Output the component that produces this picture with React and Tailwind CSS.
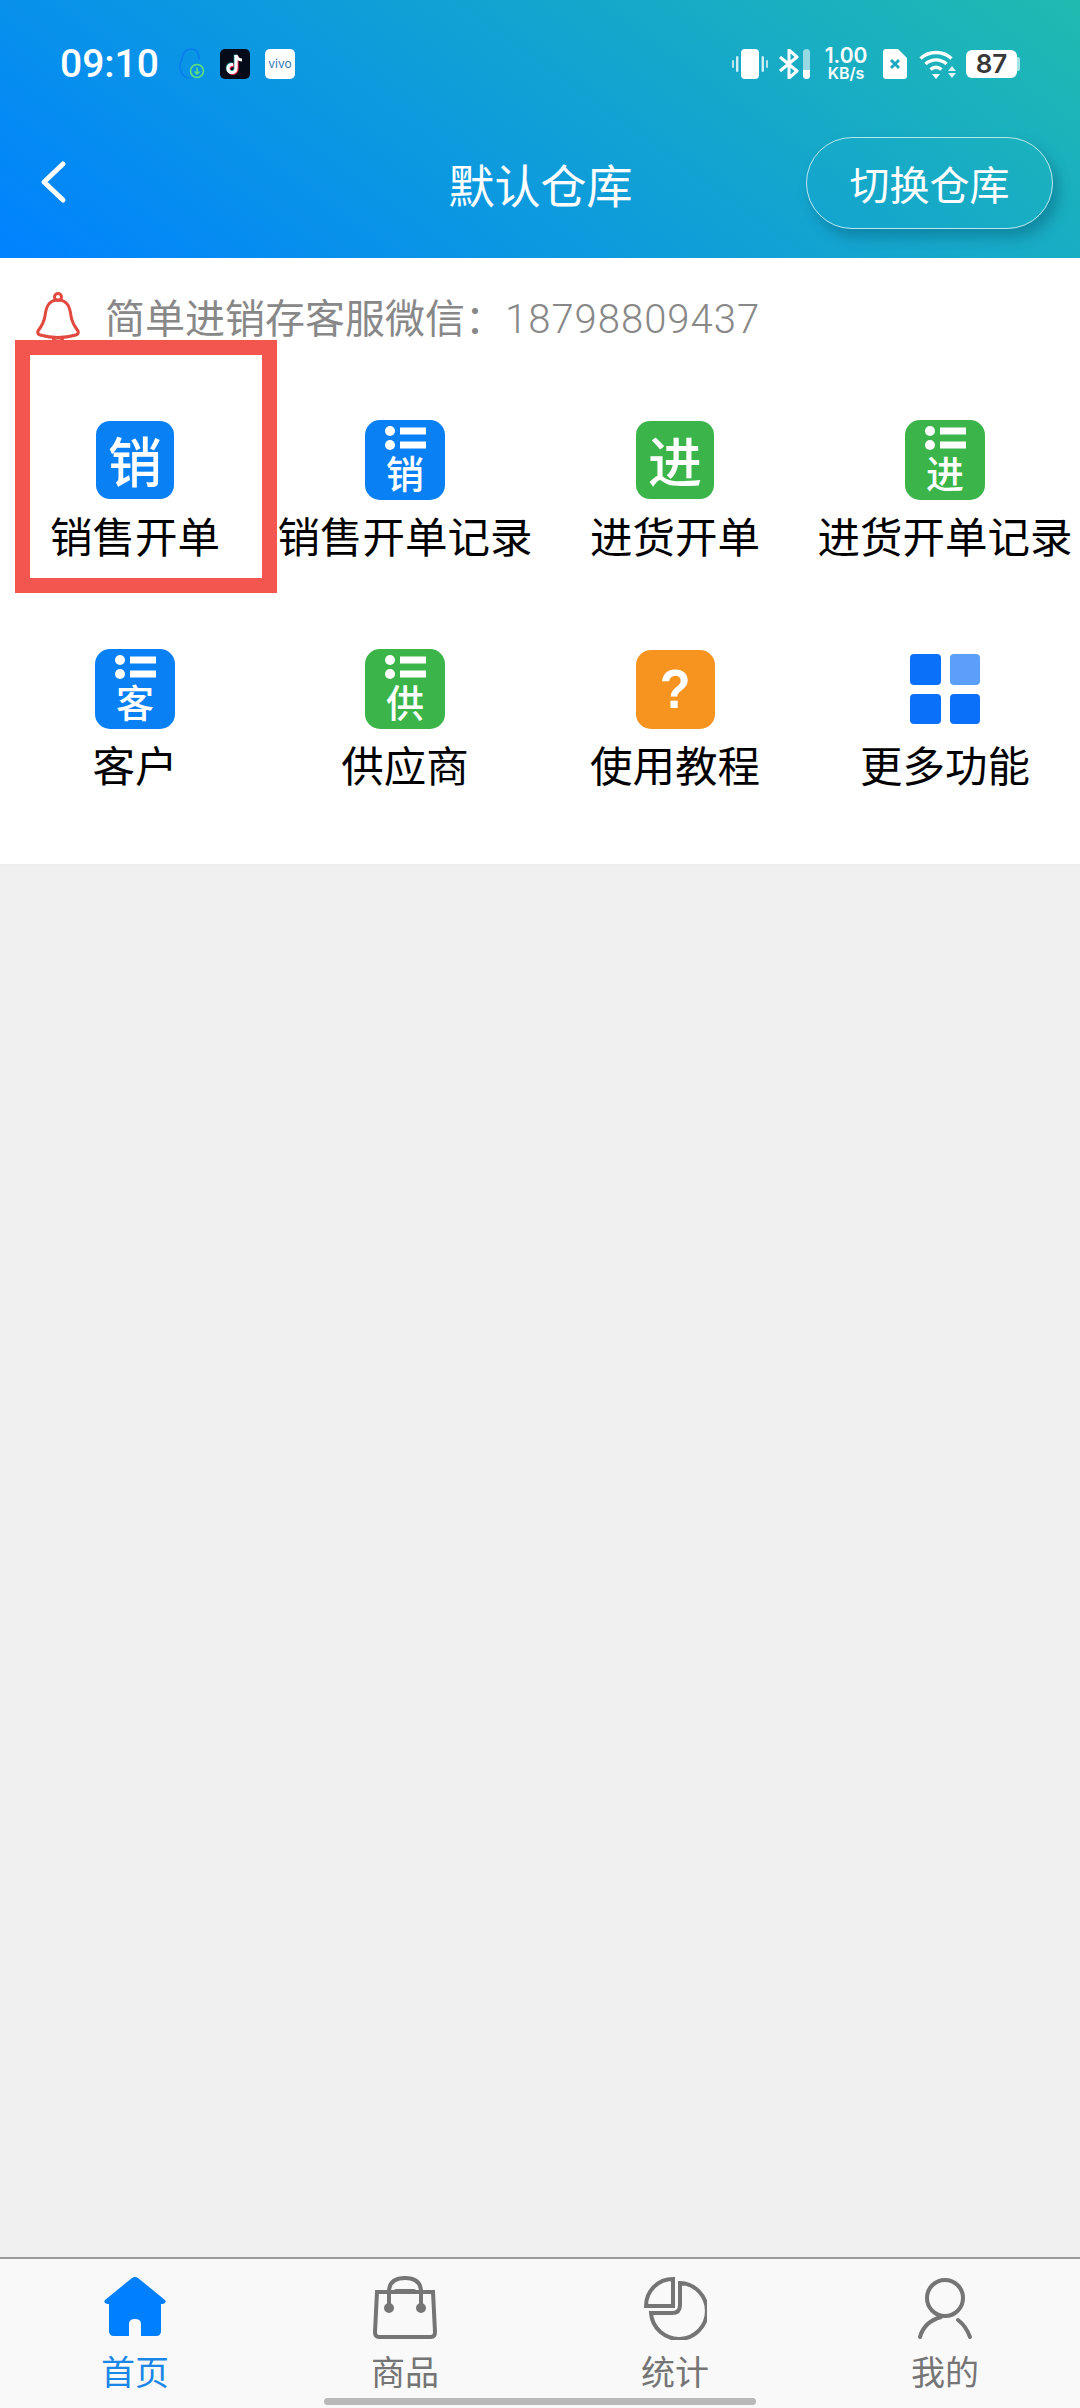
import React from 'react';

const CJK = { fontFamily: '"Noto Sans CJK SC", "Noto Sans", sans-serif' };

function StatusLeft() {
  return (
    <div className="flex items-center">
      <span className="text-[39px] leading-[40px] font-medium text-white w-[118px] ml-[60px]" style={{ fontFamily: 'Roboto, sans-serif' }}>09:10</span>
      {/* qq with download badge */}
      <svg width="30" height="32" viewBox="0 0 30 32" fill="none">
        <path d="M3 24C1 18 2 14 4 12C4 5 8 1 13 1C18 1 21 5 21 11M3 24C5 28 9 30 12 30" stroke="#0a7cf0" strokeWidth="1.6" strokeLinecap="round" />
        <circle cx="19" cy="23" r="6.5" stroke="#5fe07a" strokeWidth="1.6" />
        <path d="M19 19.5V26M16.5 23.5L19 26L21.5 23.5" stroke="#5fe07a" strokeWidth="1.5" />
      </svg>
      <div className="w-[30px] h-[30px] rounded-[5px] bg-[#050a18] ml-[12px] flex items-center justify-center">
        <svg width="22" height="24" viewBox="0 0 22 24" fill="none">
          <path d="M12 3V16C12 19 10 20.5 8 20.5C5.5 20.5 4 18.6 4 16.5C4 14 6 12.5 9 12.5" stroke="#fe2c55" strokeWidth="3.4" transform="translate(.9 .7)" />
          <path d="M12 3V16C12 19 10 20.5 8 20.5C5.5 20.5 4 18.6 4 16.5C4 14 6 12.5 9 12.5" stroke="#25f4ee" strokeWidth="3.4" transform="translate(-.6 -.5)" opacity=".6" />
          <path d="M12 3V16C12 19 10 20.5 8 20.5C5.5 20.5 4 18.6 4 16.5C4 14 6 12.5 9 12.5M12 3C12.5 6 15 8 18 8" stroke="#fff" strokeWidth="3.2" />
        </svg>
      </div>
      <div className="w-[30px] h-[30px] rounded-[5px] bg-white ml-[15px] flex items-center justify-center text-[12px] leading-none text-[#2f78b8]" style={{ fontFamily: 'Inter, sans-serif' }}>vivo</div>
    </div>
  );
}

function StatusRight() {
  return (
    <div className="flex items-center mr-[60px]">
      <svg width="36" height="30" viewBox="0 0 36 30" fill="white">
        <rect x="9" y="0" width="18" height="30" rx="4" />
        <rect x="0" y="11" width="2" height="8" rx="1" opacity=".7" />
        <rect x="4" y="7" width="2.4" height="16" rx="1.2" opacity=".8" />
        <rect x="29.6" y="7" width="2.4" height="16" rx="1.2" opacity=".8" />
        <rect x="34" y="11" width="2" height="8" rx="1" opacity=".7" />
      </svg>
      <svg width="32" height="30" viewBox="0 0 32 30" fill="none" className="ml-[10px]">
        <path d="M2 8L19 22L11 29V1L19 8L2 22" stroke="white" strokeWidth="3" strokeLinejoin="round" />
        <rect x="25" y="0" width="7" height="30" rx="3.5" fill="white" fillOpacity=".55" />
        <path d="M25 21H32V26.5C32 28.4 30.4 30 28.5 30C26.6 30 25 28.4 25 26.5Z" fill="white" />
      </svg>
      <div className="ml-[12px] w-[48px] flex flex-col items-center font-semibold text-white" style={{ fontFamily: 'Inter, sans-serif' }}>
        <span className="text-[21px] leading-[19px]">1.00</span>
        <span className="text-[16px] leading-[17px]">KB/s</span>
      </div>
      <svg width="24" height="30" viewBox="0 0 24 30" className="ml-[13px]">
        <path d="M3 0H15L24 9V27C24 28.7 22.7 30 21 30H3C1.3 30 0 28.7 0 27V3C0 1.3 1.3 0 3 0Z" fill="white" />
        <path d="M8 11L16 19M16 11L8 19" stroke="#17a8c0" strokeWidth="2.8" />
      </svg>
      <svg width="37" height="30" viewBox="0 0 37 30" fill="none" className="ml-[12px]">
        <path d="M1.5 9.5C10 1.5 24 1.5 32.5 9.5" stroke="white" strokeWidth="3.4" />
        <path d="M6.5 15C12.5 9.5 21.5 9.5 27.5 15" stroke="white" strokeWidth="3.4" />
        <path d="M11.5 20.5C15 17.5 19 17.5 22.5 20.5" stroke="white" strokeWidth="3.4" />
        <path d="M13 25H21L17 30Z" fill="white" />
        <path d="M33 17L37 22H29Z M29 24H37L33 29Z" fill="white" fillOpacity=".85" />
      </svg>
      <div className="ml-[10px] w-[54px] h-[28px] flex items-center">
        <div className="w-[51px] h-[28px] rounded-[6px] bg-white flex items-center justify-center text-[26px] font-semibold leading-none text-[#383838]" style={{ fontFamily: 'Inter, sans-serif' }}>87</div>
        <div className="w-[3px] h-[14px] rounded-r-[2px] bg-white/60" />
      </div>
    </div>
  );
}

function Header() {
  return (
    <header className="h-[258px] shrink-0 bg-[linear-gradient(36deg,#0082ff,#20bbb0)]">
      <div className="h-[137px] pt-[44px]">
        <div className="h-[40px] flex justify-between items-center">
          <StatusLeft />
          <StatusRight />
        </div>
      </div>
      <div className="grid grid-cols-[1fr_auto_1fr] items-center pl-[38px] pr-[27px] h-[92px]">
        <svg width="30" height="44" viewBox="0 0 30 44" fill="none" className="-mt-[2px]">
          <path d="M25 4L6 22L25 40" stroke="white" strokeWidth="5" strokeLinecap="round" strokeLinejoin="round" />
        </svg>
        <h1 className="text-[46px] font-normal text-white leading-none -ml-[10px]" style={CJK}>默认仓库</h1>
        <button className="justify-self-end w-[247px] h-[92px] rounded-full border border-white/70 text-[40px] text-white shadow-[6px_8px_14px_rgba(0,60,90,0.32)]" style={CJK}>切换仓库</button>
      </div>
    </header>
  );
}

function GlyphIcon({ char, color }) {
  return (
    <div className={`w-[78px] h-[78px] rounded-[14px] flex items-center justify-center text-white text-[54px] leading-none font-medium ${color}`} style={CJK}>
      {char}
    </div>
  );
}

function ListIcon({ char, color }) {
  return (
    <div className={`w-[80px] h-[80px] rounded-[15px] flex flex-col items-center text-white ${color}`}>
      <svg width="42" height="26" viewBox="0 0 42 26" fill="white" className="mt-[5px] shrink-0">
        <circle cx="6" cy="6" r="5" />
        <circle cx="6" cy="20" r="5" />
        <rect x="16" y="2.5" width="26" height="7" />
        <rect x="16" y="16.5" width="26" height="7" />
      </svg>
      <span className="text-[38px] leading-[40px] font-medium mt-[1px]" style={CJK}>{char}</span>
    </div>
  );
}

function HelpIcon() {
  return (
    <div className="w-[79px] h-[79px] rounded-[15px] bg-[#f79420] flex items-center justify-center text-white text-[56px] font-bold leading-none" style={{ fontFamily: '"Liberation Sans", sans-serif' }}>
      <span className="scale-x-90">?</span>
    </div>
  );
}

function MoreIcon() {
  return (
    <div className="w-[80px] h-[80px] grid grid-cols-2 gap-[9px] p-[5px]">
      <div className="rounded-[4px] bg-[#0a70fa]" />
      <div className="rounded-[4px] bg-[#5b9ffb]" />
      <div className="rounded-[4px] bg-[#0a70fa]" />
      <div className="rounded-[4px] bg-[#0a70fa]" />
    </div>
  );
}

const BLUE = 'bg-[#0a80f5]';
const GREEN = 'bg-[#3bb54a]';

const MENU = [
  { label: '销售开单', icon: <GlyphIcon char="销" color={BLUE} /> },
  { label: '销售开单记录', icon: <ListIcon char="销" color={BLUE} /> },
  { label: '进货开单', icon: <GlyphIcon char="进" color={GREEN} /> },
  { label: '进货开单记录', icon: <ListIcon char="进" color={GREEN} /> },
  { label: '客户', icon: <ListIcon char="客" color={BLUE} /> },
  { label: '供应商', icon: <ListIcon char="供" color={GREEN} /> },
  { label: '使用教程', icon: <HelpIcon /> },
  { label: '更多功能', icon: <MoreIcon /> },
];

function Notice() {
  return (
    <div className="h-[120px] pt-[33px] pl-[35px] flex items-start">
      <svg width="46" height="52" viewBox="0 0 46 52" fill="none" className="shrink-0">
        <circle cx="23" cy="6" r="3.5" stroke="#e2483d" strokeWidth="3" />
        <path d="M23 9C13 9 11 17 10 25C9 32 6 36 3 40C2 42 3 43 5 44C16 47 30 47 41 44C43 43 44 42 43 40C40 36 37 32 36 25C35 17 33 9 23 9Z" stroke="#e2483d" strokeWidth="3" strokeLinejoin="round" />
        <path d="M18 47C19 51 27 51 28 47" stroke="#e2483d" strokeWidth="3" />
      </svg>
      <span className="ml-[24px] text-[40px] leading-[50px] text-[#888888] whitespace-nowrap" style={CJK}>
        简单进销存客服微信：
        <span className="tracking-[1px] font-light" style={{ fontFamily: 'Roboto, sans-serif' }}>18798809437</span>
      </span>
    </div>
  );
}

function MenuGrid() {
  return (
    <div className="grid grid-cols-4 pb-[28px]">
      {MENU.map((item) => (
        <div key={item.label} className="h-[229px] pt-[43px] flex flex-col items-center">
          <div className="h-[78px] flex items-center justify-center">{item.icon}</div>
          <span className="mt-[11px] text-[42.5px] leading-[50px] text-black whitespace-nowrap" style={CJK}>{item.label}</span>
        </div>
      ))}
    </div>
  );
}

const TABS = [
  {
    label: '首页',
    active: true,
    icon: <path d="M29 2Q32 0 35 2L62 24Q64 27 60 28H58V55Q58 60 53 60H38V48Q38 43 32 43Q26 43 26 48V60H11Q6 60 6 55V28H4Q0 27 2 24Z" fill="#0080ff" />,
  },
  {
    label: '商品',
    icon: (
      <g stroke="#757575" strokeWidth="4" fill="none">
        <path d="M4 16H60L62 56Q62 61 58 61H6Q2 61 2 56Z" />
        <path d="M16 32V16Q16 2 32 2Q48 2 48 16V32" />
        <path d="M23 15H41" strokeLinecap="round" />
        <circle cx="16" cy="32" r="3" fill="#757575" />
        <circle cx="48" cy="32" r="3" fill="#757575" />
      </g>
    ),
  },
  {
    label: '统计',
    icon: (
      <g stroke="#757575" strokeWidth="4" fill="none">
        <path d="M30 3V30H3C3 15 15 3 30 3Z" />
        <path d="M37 7V29Q37 37 29 37H8A28 28 0 1 0 37 7Z" />
      </g>
    ),
  },
  {
    label: '我的',
    icon: (
      <g stroke="#757575" strokeWidth="4" fill="none" strokeLinecap="round">
        <circle cx="32" cy="22" r="18" />
        <path d="M7 61Q11 46 28 41" />
        <path d="M45 44Q53 50 57 61" />
      </g>
    ),
  },
];

function TabBar() {
  return (
    <nav className="relative h-[151px] shrink-0 border-t-2 border-[#999999] bg-[#f9f9f9] grid grid-cols-4">
      {TABS.map((tab) => (
        <div key={tab.label} className="flex flex-col items-center pt-[17px]">
          <svg width="64" height="64" viewBox="0 0 64 64">{tab.icon}</svg>
          <span className={`mt-[11px] text-[34px] leading-[40px] ${tab.active ? 'text-[#1a86e8]' : 'text-[#757575]'}`} style={CJK}>{tab.label}</span>
        </div>
      ))}
      <div className="absolute left-[324px] bottom-[3px] w-[432px] h-[7px] rounded-full bg-[#b9b9b9]" />
    </nav>
  );
}

export default function App() {
  return (
    <div className="w-[1080px] h-[2408px] flex flex-col bg-[#f0f0f0] overflow-hidden">
      <Header />
      <section className="relative bg-white border-b border-[#ececec]">
        <Notice />
        <MenuGrid />
        {/* annotation box over the first item */}
        <div className="absolute left-[15px] top-[82px] w-[262px] h-[253px] border-[15px] border-[#f2564e]" />
      </section>
      <main className="flex-1" />
      <TabBar />
    </div>
  );
}
